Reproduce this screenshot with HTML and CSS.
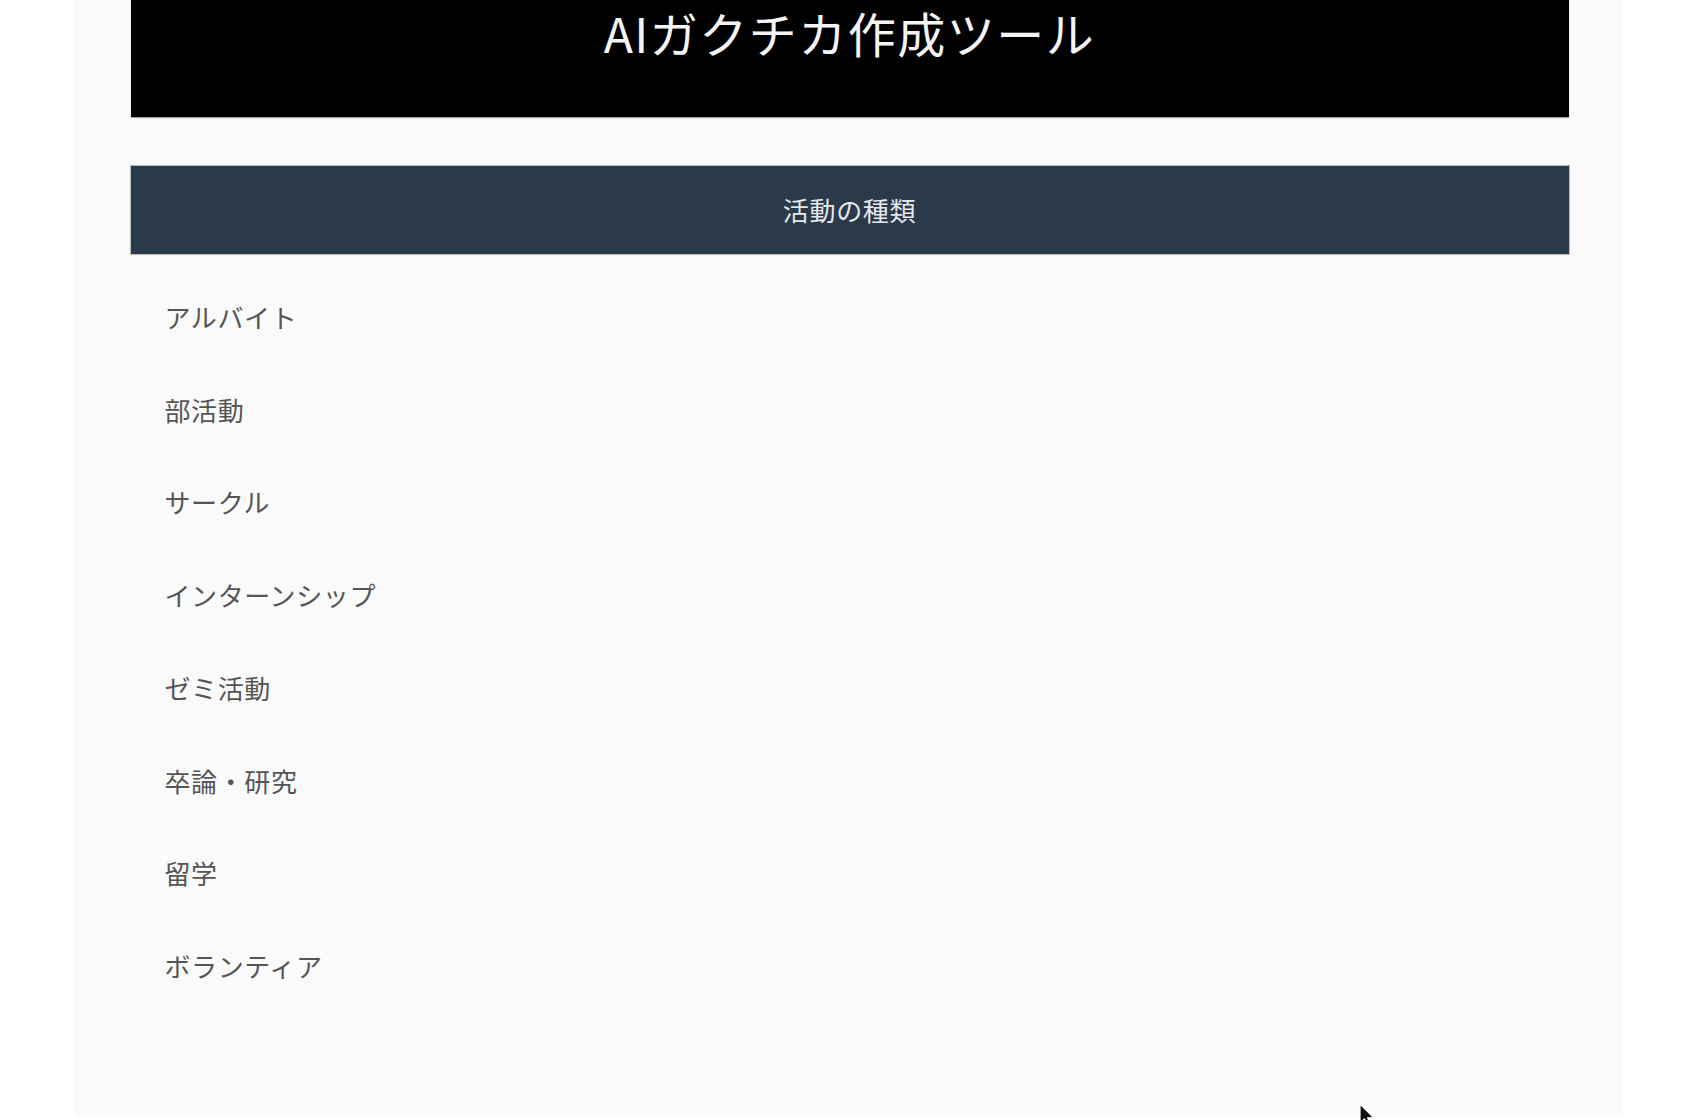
FILE: index.html
```html
<!DOCTYPE html>
<html lang="ja">
<head>
<meta charset="utf-8">
<title>AIガクチカ作成ツール</title>
<link rel="stylesheet" href="styles.css">
</head>
<body>
<div class="page">
  <header class="hero">
    <h1 class="hero-title">AIガクチカ作成ツール</h1>
  </header>
  <nav class="section-bar">活動の種類</nav>
  <ul class="activity-list">
    <li class="activity-item">アルバイト</li>
    <li class="activity-item">部活動</li>
    <li class="activity-item">サークル</li>
    <li class="activity-item">インターンシップ</li>
    <li class="activity-item">ゼミ活動</li>
    <li class="activity-item">卒論・研究</li>
    <li class="activity-item">留学</li>
    <li class="activity-item">ボランティア</li>
  </ul>
</div>
<svg class="cursor" width="20" height="28" viewBox="0 0 20 28" aria-hidden="true">
  <path d="M1 1 L1 20 L5.5 15.8 L9 23.5 L12 22.2 L8.6 14.8 L14.5 14.5 Z" fill="#111" stroke="#fff" stroke-width="1.2" stroke-linejoin="round"/>
</svg>
</body>
</html>
```
FILE: styles.css
```css
html, body {
  margin: 0;
  padding: 0;
  background: #ffffff;
  height: 1120px;
  overflow: hidden;
}

body {
  font-family: "Noto Sans CJK JP", "Noto Sans", sans-serif;
  position: relative;
}

.page {
  width: 1549px;
  margin: 0 auto;
  min-height: 1120px;
  background: #fafafa;
  padding: 0 54px 0 57px;
  box-sizing: border-box;
}

.hero {
  background: #000000;
  padding: 0 0 50px;
  box-shadow: 0 1px 1px rgba(0, 0, 0, 0.35);
}

.hero-title {
  margin: -3px 0 0;
  color: #f4f4f4;
  font-size: 48px;
  font-weight: 400;
  letter-spacing: 1.5px;
  line-height: 70px;
  text-align: center;
}

.section-bar {
  margin-top: 49px;
  height: 88px;
  background: #2b3a4a;
  color: #e6e8ea;
  font-size: 26px;
  letter-spacing: 0.7px;
  line-height: 88px;
  text-align: center;
  box-shadow: 0 0 1px 1px rgba(120, 120, 120, 0.45);
}

.activity-list {
  list-style: none;
  margin: 0;
  padding: 17px 0 0;
}

.activity-item {
  padding: 26px 0 26px 34px;
  line-height: 40.7px;
  font-size: 26px;
  letter-spacing: 0.6px;
  color: #555555;
}

.cursor {
  position: absolute;
  left: 1359px;
  top: 1103px;
}
```
